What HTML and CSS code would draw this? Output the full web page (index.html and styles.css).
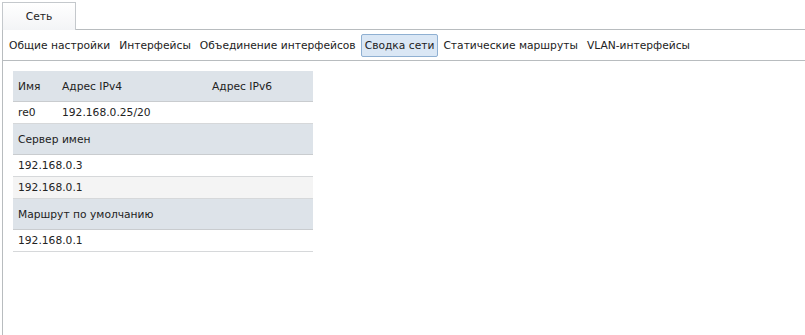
FILE: index.html
```html
<!DOCTYPE html>
<html>
<head>
    <meta charset="UTF-8">
    <title>Сеть</title>
    <link rel="stylesheet" href="styles.css">
</head>
<body>
    <div class="tabs">
        <div class="tab active">Сеть</div>
        <div class="tabs-rest"></div>
    </div>
    <div class="panel">
        <div class="subnav">
            <span class="sub">Общие настройки</span>
            <span class="sub">Интерфейсы</span>
            <span class="sub">Объединение интерфейсов</span>
            <span class="sub selected">Сводка сети</span>
            <span class="sub">Статические маршруты</span>
            <span class="sub">VLAN-интерфейсы</span>
        </div>
        <div class="content">
            <table class="summary">
                <tr class="head">
                    <td class="c-name">Имя</td>
                    <td class="c-v4">Адрес IPv4</td>
                    <td class="c-v6">Адрес IPv6</td>
                </tr>
                <tr class="row">
                    <td>re0</td>
                    <td>192.168.0.25/20</td>
                    <td></td>
                </tr>
                <tr class="head">
                    <td colspan="3">Сервер имен</td>
                </tr>
                <tr class="row">
                    <td colspan="3">192.168.0.3</td>
                </tr>
                <tr class="row alt">
                    <td colspan="3">192.168.0.1</td>
                </tr>
                <tr class="head">
                    <td colspan="3">Маршрут по умолчанию</td>
                </tr>
                <tr class="row">
                    <td colspan="3">192.168.0.1</td>
                </tr>
            </table>
        </div>
    </div>
</body>
</html>
```

FILE: styles.css
```css
body {
    margin: 0;
    background: #fff;
    font-family: "DejaVu Sans", Verdana, sans-serif;
    font-size: 10.7px;
    color: #222;
}
.tabs {
    display: flex;
    padding: 2px 0 0 2px;
}
.tab {
    width: 72px;
    height: 27px;
    line-height: 28px;
    text-align: center;
    border: 1px solid #c4c8cc;
    border-bottom: none;
    background: linear-gradient(#fff, #f3f4f6);
}
.tabs-rest {
    flex: 1;
    border-bottom: 1px solid #b8bcbf;
}
.panel {
    margin-left: 2px;
    border-left: 1px solid #b8bcbf;
    height: 305px;
}
.subnav {
    display: flex;
    align-items: center;
    gap: 1px;
    height: 30px;
    padding-left: 2px;
    border-bottom: 1px solid #b8bcbf;
}
.sub {
    padding: 4px 3px 4px;
    border: 1px solid transparent;
    white-space: nowrap;
}
.sub.selected {
    background: #dae7f5;
    border-color: #8fb0d2;
    border-radius: 2px;
}
.content {
    padding: 10px 0 0 10px;
}
.summary {
    width: 300px;
    border-collapse: collapse;
}
.summary td {
    padding: 0 5px;
    white-space: nowrap;
}
.head td {
    background: #dde3e9;
    height: 30px;
    border-bottom: 1px solid #c9cccf;
}
.row td {
    height: 21px;
    border-bottom: 1px solid #d6d8da;
}
.row.alt td {
    background: #f4f4f4;
}
.c-name { width: 34px; }
.c-v4 { width: 140px; }
```
